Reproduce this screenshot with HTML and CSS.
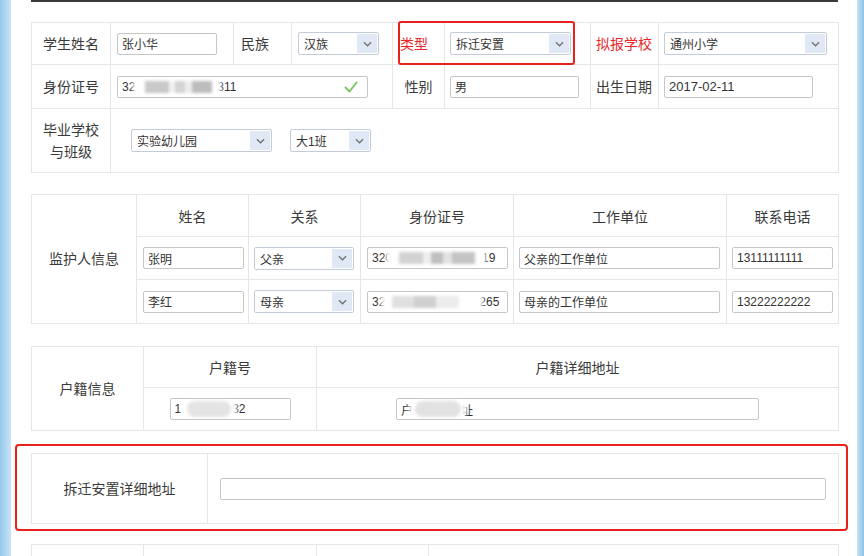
FILE: index.html
```html
<!DOCTYPE html>
<html lang="zh-CN">
<head>
<meta charset="utf-8">
<title>学生信息</title>
<link rel="stylesheet" href="styles.css">
</head>
<body>
<div class="page">
  <div class="topbar"></div>

  <div class="basic">
    <table class="grid">
      <colgroup>
        <col class="c79"><col class="c123"><col class="c58"><col class="c101"><col class="c52"><col class="c146"><col class="c68"><col class="c180">
      </colgroup>
      <tr class="r42">
        <td class="lbl">学生姓名</td>
        <td class="fc p6"><span class="field w100">张小华</span></td>
        <td class="lbl left">民族</td>
        <td class="fc p6"><span class="select w81"><span class="sel-text">汉族</span><span class="sel-arrow"><svg viewBox="0 0 10 6" width="9" height="6"><path d="M1 1l4 4 4-4" fill="none" stroke="#707070" stroke-width="1.4"/></svg></span></span></td>
        <td class="lbl left red">类型</td>
        <td class="fc"><span class="select w121"><span class="sel-text">拆迁安置</span><span class="sel-arrow"><svg viewBox="0 0 10 6" width="9" height="6"><path d="M1 1l4 4 4-4" fill="none" stroke="#707070" stroke-width="1.4"/></svg></span></span></td>
        <td class="lbl left5 red">拟报学校</td>
        <td class="fc"><span class="select w163"><span class="sel-text">通州小学</span><span class="sel-arrow"><svg viewBox="0 0 10 6" width="9" height="6"><path d="M1 1l4 4 4-4" fill="none" stroke="#707070" stroke-width="1.4"/></svg></span></span></td>
      </tr>
      <tr class="r44">
        <td class="lbl">身份证号</td>
        <td class="fc p6" colspan="3"><span class="field w251">32<span class="blur bl-id"></span>311<svg class="check" viewBox="0 0 14 12" width="14" height="12"><path d="M1.5 6.5l4 4 7-9" fill="none" stroke="#7cc866" stroke-width="2" stroke-linecap="round" stroke-linejoin="round"/></svg></span></td>
        <td class="lbl">性别</td>
        <td class="fc"><span class="field w129">男</span></td>
        <td class="lbl left5">出生日期</td>
        <td class="fc"><span class="field w149 num13">2017-02-11</span></td>
      </tr>
      <tr class="r64">
        <td class="lbl two">毕业学校<br>与班级</td>
        <td class="fc" colspan="7">
          <div class="school-row">
            <span class="select w141"><span class="sel-text">实验幼儿园</span><span class="sel-arrow"><svg viewBox="0 0 10 6" width="9" height="6"><path d="M1 1l4 4 4-4" fill="none" stroke="#707070" stroke-width="1.4"/></svg></span></span>
            <span class="select w81"><span class="sel-text">大1班</span><span class="sel-arrow"><svg viewBox="0 0 10 6" width="9" height="6"><path d="M1 1l4 4 4-4" fill="none" stroke="#707070" stroke-width="1.4"/></svg></span></span>
          </div>
        </td>
      </tr>
    </table>
    <div class="mark"></div>
  </div>

  <table class="grid guard">
    <colgroup>
      <col class="c105"><col class="c112"><col class="c112"><col class="c153"><col class="c213"><col class="c112">
    </colgroup>
    <tr class="r42">
      <td class="lbl" rowspan="3">监护人信息</td>
      <th>姓名</th>
      <th>关系</th>
      <th>身份证号</th>
      <th>工作单位</th>
      <th>联系电话</th>
    </tr>
    <tr class="r43">
      <td class="fc p6"><span class="field w101">张明</span></td>
      <td class="fc"><span class="select w100"><span class="sel-text">父亲</span><span class="sel-arrow"><svg viewBox="0 0 10 6" width="9" height="6"><path d="M1 1l4 4 4-4" fill="none" stroke="#707070" stroke-width="1.4"/></svg></span></span></td>
      <td class="fc p6"><span class="field w141">320<span class="blur bl-g1"></span>19</span></td>
      <td class="fc"><span class="field w201">父亲的工作单位</span></td>
      <td class="fc"><span class="field w101">13111111111</span></td>
    </tr>
    <tr class="r44">
      <td class="fc p6"><span class="field w101">李红</span></td>
      <td class="fc"><span class="select w100"><span class="sel-text">母亲</span><span class="sel-arrow"><svg viewBox="0 0 10 6" width="9" height="6"><path d="M1 1l4 4 4-4" fill="none" stroke="#707070" stroke-width="1.4"/></svg></span></span></td>
      <td class="fc p6"><span class="field w141">32<span class="blur bl-g2"></span>265</span></td>
      <td class="fc"><span class="field w201">母亲的工作单位</span></td>
      <td class="fc"><span class="field w101">13222222222</span></td>
    </tr>
  </table>

  <table class="grid huji">
    <colgroup><col class="c112"><col class="c173"><col class="c522"></colgroup>
    <tr class="r41">
      <td class="lbl" rowspan="2">户籍信息</td>
      <th>户籍号</th>
      <th>户籍详细地址</th>
    </tr>
    <tr class="r43">
      <td class="fcc"><span class="field w121">1<span class="blur bl-h1"></span>32</span></td>
      <td class="fcc"><span class="field w363">户<span class="blur bl-h2"></span>址</span></td>
    </tr>
  </table>

  <div class="marked">
    <table class="grid">
      <colgroup><col class="c176"><col class="c631"></colgroup>
      <tr class="r70">
        <td class="lbl">拆迁安置详细地址</td>
        <td class="fcc"><span class="field w606"></span></td>
      </tr>
    </table>
  </div>

  <table class="grid next">
    <colgroup><col class="c112"><col class="c173"><col class="c112"><col class="c410"></colgroup>
    <tr class="r43">
      <td></td><td></td><td></td><td></td>
    </tr>
  </table>
</div>
</body>
</html>
```

FILE: styles.css
```css
* { box-sizing: border-box; }
html, body { margin: 0; padding: 0; }
body {
  width: 864px;
  height: 556px;
  overflow: hidden;
  font-family: "Liberation Sans", "Noto Sans CJK SC", sans-serif;
  color: #333;
  background:
    linear-gradient(to right, #98c9ec 0, #c9e3f6 11px, transparent 11px),
    linear-gradient(to left, #8dc1e6 0, #c8e2f5 7px, transparent 7px),
    #fff;
}
.page {
  margin: 0 7px 0 11px;
  padding: 0 19px 0 20px;
  height: 556px;
  background: #fff;
}
.topbar {
  height: 2px;
  background: #3a3a3a;
}

.grid {
  width: 807px;
  border-collapse: collapse;
  table-layout: fixed;
  background: #fff;
}
.grid td, .grid th {
  border: 1px solid #e6e6e6;
  padding: 0;
  font-size: 14px;
  font-weight: normal;
  color: #3a3a3a;
  vertical-align: middle;
  text-align: center;
  white-space: nowrap;
}

.c52 { width: 52px; } .c58 { width: 58px; } .c68 { width: 68px; } .c79 { width: 79px; }
.c101 { width: 101px; } .c105 { width: 105px; } .c112 { width: 112px; } .c123 { width: 123px; }
.c146 { width: 146px; } .c153 { width: 153px; } .c173 { width: 173px; } .c176 { width: 176px; }
.c180 { width: 180px; } .c213 { width: 213px; } .c410 { width: 410px; } .c522 { width: 522px; }
.c631 { width: 631px; }

.grid .r41 > * { height: 41px; }
.grid .r42 > * { height: 42px; }
.grid .r43 > * { height: 43px; }
.grid .r44 > * { height: 44px; }
.grid .r64 > * { height: 64px; }
.grid .r70 > * { height: 70px; }

.grid .lbl { line-height: 20px; }
.grid .lbl.left { text-align: left; padding-left: 7px; }
.grid .lbl.left5 { text-align: left; padding-left: 5px; }
.grid .lbl.red { color: #e8262b; }
.grid .lbl.two { line-height: 22px; }

.grid .fc { text-align: left; padding-left: 5px; }
.grid .fc.p6 { padding-left: 6px; }
.grid .fcc { text-align: center; }

.basic {
  position: relative;
  margin-top: 20px;
}
.mark {
  position: absolute;
  left: 367px;
  top: -1px;
  width: 177px;
  height: 44px;
  border: 2px solid #e8221b;
  border-radius: 3px;
}

.school-row {
  display: flex;
  gap: 18px;
  padding-left: 15px;
}

.field {
  display: inline-flex;
  align-items: center;
  height: 22px;
  padding: 0 4px;
  border: 1px solid #c6c6c6;
  border-radius: 2px;
  background: #fff;
  font-size: 12px;
  color: #333;
  vertical-align: middle;
  white-space: nowrap;
  overflow: hidden;
  text-align: left;
}
.num13 { font-size: 13px; }
.w100 { width: 100px; } .w101 { width: 101px; } .w121 { width: 121px; } .w129 { width: 129px; }
.w141 { width: 141px; } .w149 { width: 149px; } .w163 { width: 163px; } .w201 { width: 201px; }
.w251 { width: 251px; } .w363 { width: 363px; } .w606 { width: 606px; } .w81 { width: 81px; }

.check { margin-left: auto; margin-right: 5px; }

.select {
  display: inline-flex;
  align-items: stretch;
  height: 23px;
  border: 1px solid #c3cbd6;
  border-radius: 2px;
  background: #fff;
  font-size: 12px;
  color: #333;
  vertical-align: middle;
  text-align: left;
  overflow: hidden;
}
.sel-text {
  flex: 1;
  display: flex;
  align-items: center;
  padding-left: 5px;
  white-space: nowrap;
}
.sel-arrow {
  width: 20px;
  margin: 1px;
  background: #dfe8f4;
  display: flex;
  align-items: center;
  justify-content: center;
}

.blur {
  display: inline-block;
  height: 12px;
  filter: blur(1.6px);
  box-shadow: 0 0 3px 6px rgba(255,255,255,0.95);
  background: #fff;
}
.bl-id {
  width: 76px;
  margin: 0 2px 0 4px;
  background: linear-gradient(to right, #fff 0, #fff 8%, #c9c9c9 8%, #c9c9c9 40%, #f1f1f1 40%, #f1f1f1 48%, #d4d4d4 48%, #d4d4d4 60%, #ededed 60%, #ededed 70%, #bcbcbc 70%, #bcbcbc 96%, #fff 96%);
}
.bl-g1 {
  width: 88px;
  margin: 0 2px 0 0;
  background: linear-gradient(to right, #fff 0, #fff 8%, #d2d2d2 8%, #d2d2d2 35%, #eeeeee 35%, #eeeeee 44%, #bfbfbf 44%, #bfbfbf 58%, #e2e2e2 58%, #e2e2e2 68%, #c4c4c4 68%, #c4c4c4 94%, #fff 94%);
}
.bl-g2 {
  width: 90px;
  margin: 0 2px 0 2px;
  background: linear-gradient(to right, #fff 0, #fff 6%, #e0e0e0 6%, #e0e0e0 30%, #d0d0d0 30%, #d0d0d0 55%, #ececec 55%, #ececec 80%, #fff 80%);
}
.bl-h1 {
  width: 44px;
  margin: 0 1px 0 6px;
  height: 16px;
  background: #e4e4e4;
  border-radius: 8px;
}
.bl-h2 {
  width: 46px;
  margin: 0 0 0 2px;
  height: 16px;
  background: #e2e2e2;
  border-radius: 8px;
}

.guard { margin-top: 21px; }
.huji { margin-top: 22px; }

.marked {
  margin: 13px -10px 0 -16px;
  padding: 7px 8px 5px 14px;
  border: 2px solid #e8221b;
  border-radius: 4px;
}

.next { margin-top: 13px; }
```
